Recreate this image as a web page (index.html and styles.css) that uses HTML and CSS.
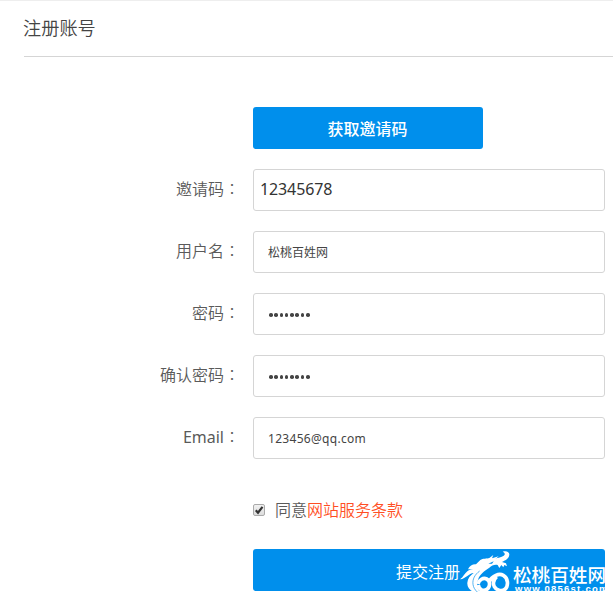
FILE: index.html
```html
<!DOCTYPE html>
<html lang="zh-CN">
<head>
<meta charset="utf-8">
<title>注册账号</title>
<link rel="stylesheet" href="styles.css">
</head>
<body>
<main class="page">
  <h1 class="title">注册账号</h1>
  <form class="form">
    <button class="button button-invite" type="button">获取邀请码</button>
    <label class="label" for="code">邀请码<span class="colon" lang="zh-TW">：</span></label>
    <input class="field field-code" id="code" type="text" value="12345678">
    <label class="label" for="user">用户名<span class="colon" lang="zh-TW">：</span></label>
    <input class="field" id="user" type="text" value="松桃百姓网">
    <label class="label" for="pass">密码<span class="colon" lang="zh-TW">：</span></label>
    <div class="field secret" id="pass"><i></i><i></i><i></i><i></i><i></i><i></i><i></i><i></i></div>
    <label class="label" for="confirm">确认密码<span class="colon" lang="zh-TW">：</span></label>
    <div class="field secret" id="confirm"><i></i><i></i><i></i><i></i><i></i><i></i><i></i><i></i></div>
    <label class="label label-email" for="email">Email<span class="colon" lang="zh-TW">：</span></label>
    <input class="field field-email" id="email" type="text" value="123456@qq.com">
    <div class="terms">
      <span class="check"><svg viewBox="0 0 12 12"><path d="M2.8 6.2 5 8.7 9.5 2.8" fill="none" stroke="#333" stroke-width="2.2"/></svg></span>
      <span>同意<a class="link">网站服务条款</a></span>
    </div>
    <div class="submit">
      <button class="button button-submit" type="button">提交注册</button>
      <div class="brand">
        <svg class="dragon" viewBox="60 30 150 126" fill="#fff">
          <path d="M60 118C70 112 73 101 82 94C91 86 101 89 109 84C119 78 118 66 132 61C150 54 173 58 190 48C197 44 195 38 188 35C199 31 208 36 208 44C207 57 194 61 186 66L198 70L201 79L193 75L190 82L184 75L178 84L173 75C163 73 155 77 148 83C133 93 119 103 114 119C109 135 113 148 120 157H102C88 150 81 140 82 128C83 115 91 106 101 99C86 100 79 116 60 118Z"/>
          <path d="M84 88C89 76 99 72 108 73L121 60C129 54 140 57 148 54L160 45L156 55L176 49L164 59L145 63C128 67 126 80 109 88Z"/>
          <path d="M145 71 161 64 156 71Z" fill="#008fec"/>
          <g fill="none" stroke="#fff" stroke-width="11">
            <path d="M114 132C117 119 130 112 140 117C152 123 151 140 141 148C130 156 116 148 115 135"/>
            <path d="M148 124C157 107 177 99 190 106C205 114 206 138 195 148C184 156 169 151 163 140C158 130 161 118 170 110"/>
          </g>
          <path d="M119 93C104 104 97 118 99 133C100 142 105 150 112 156" fill="none" stroke="#008fec" stroke-width="2"/>
        </svg>
        <div class="wordmark">
          <span class="brand-name">松桃百姓网</span>
          <span class="brand-url">www.0856st.com</span>
        </div>
      </div>
    </div>
  </form>
</main>
</body>
</html>
```
FILE: styles.css
```css
* { box-sizing: border-box; }
body {
  margin: 0;
  background: #fff;
  color: #5a5a5a;
  font: 16px/24px "Noto Sans", "Noto Sans CJK SC", sans-serif;
  overflow: hidden;
}
.page {
  height: 601px;
  border-top: 1px solid #eee;
  padding-left: 24px;
}
.title {
  margin: 0 0 0 -1px;
  height: 56px;
  color: #444;
  font-size: 18.2px;
  font-weight: 350;
  line-height: 52px;
  font-family: "Noto Sans CJK SC", sans-serif;
}
.form {
  display: grid;
  grid-template-columns: 216px 352px;
  column-gap: 13px;
  row-gap: 20px;
  margin-top: -1px;
  border-top: 1px solid #d5d5d5;
  padding-top: 50px;
}
.button {
  height: 42px;
  padding: 0;
  border: 0;
  border-radius: 3px;
  background: #008fec;
  color: #fff;
  font: 16px/42px "Noto Sans CJK SC", sans-serif;
}
.button-invite {
  grid-column: 2;
  width: 230px;
  padding-right: 1px;
  font-weight: 500;
}
.label {
  height: 42px;
  text-align: right;
  font-family: "Noto Sans CJK SC", sans-serif;
  font-weight: 350;
  line-height: 38px;
  white-space: nowrap;
}
.label-email {
  font-family: "Noto Sans", "Noto Sans CJK SC", sans-serif;
  font-weight: 400;
}
.colon {
  font-family: "Noto Sans CJK TC", sans-serif;
  font-weight: 300;
}
.field {
  width: 352px;
  height: 42px;
  border: 1px solid #d5d5d5;
  border-radius: 3px;
  padding: 0 14px;
  background: #fff;
  color: #444;
  font: 12px "Noto Sans", "Noto Sans CJK SC", sans-serif;
  outline: 0;
}
.field-email { letter-spacing: .3px; }
.field-code {
  padding: 0 6px 2px;
  color: #333;
  font-size: 16px;
  letter-spacing: -.12px;
}
.secret {
  display: flex;
  align-items: center;
  gap: 1.8px;
  padding: 2px 0 0 15px;
}
.secret i {
  width: 3.5px;
  height: 3.5px;
  border-radius: 50%;
  background: #444;
}
.terms {
  grid-column: 2;
  display: flex;
  align-items: center;
  gap: 10px;
  height: 24px;
  margin: 18px 0 8px;
  font-family: "Noto Sans CJK SC", sans-serif;
  font-weight: 350;
  line-height: 22px;
}
.check {
  width: 12px;
  height: 12px;
  margin-top: 1px;
  border: 1px solid #aaa;
  border-radius: 2px;
  background: linear-gradient(#f1f1f1, #ddd);
}
.check svg {
  display: block;
  width: 12px;
  height: 12px;
  margin: -1px;
}
.link { color: #ff4f24; }
.submit {
  grid-column: 2;
  position: relative;
  height: 45px;
}
.button-submit { width: 352px; padding-right: 2px; line-height: 44px; }
.brand {
  position: absolute;
  left: 207px;
  top: 1px;
  display: flex;
  color: #fff;
  font-family: "Noto Sans CJK SC", sans-serif;
}
.dragon {
  flex: none;
  width: 50px;
  height: 42px;
}
.wordmark {
  display: flex;
  flex-direction: column;
  padding: 14px 0 0 3px;
  white-space: nowrap;
}
.brand-name {
  font-size: 18.6px;
  font-weight: 500;
  line-height: 19px;
}
.brand-url {
  padding-left: 2px;
  margin-top: 1px;
  font: 700 9.5px/9px "Liberation Sans", sans-serif;
  letter-spacing: 1.25px;
}
```
